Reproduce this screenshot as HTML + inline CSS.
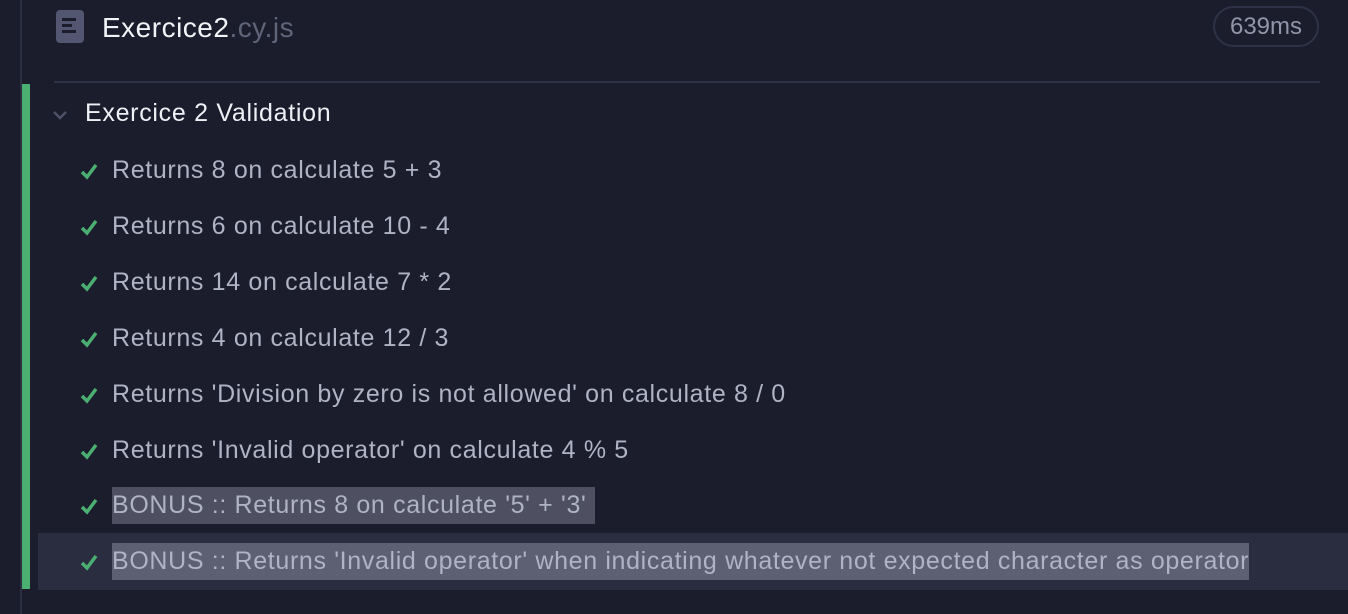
<!DOCTYPE html>
<html><head><style>
body{margin:0;width:1348px;height:614px;background:#1b1d2c;overflow:hidden;font-family:"Liberation Sans",sans-serif;position:relative}
.vl{position:absolute;left:20px;top:0;width:2px;height:614px;background:#2c2f42}
.gb{position:absolute;left:22px;top:84px;width:8px;height:505px;background:#4caf72}
.hr{position:absolute;left:54px;top:81px;width:1266px;height:2px;background:#2e3145}
.title{position:absolute;left:102px;top:12px;font-size:28px;letter-spacing:0.5px;color:#f2f3f7}
.title span{color:#5f6479}
.badge{position:absolute;left:1213px;top:6px;width:106px;height:41px;border:2px solid #2f3246;border-radius:22px;box-sizing:border-box;color:#9295a8;font-size:24px;line-height:37px;text-align:center}
.suite{position:absolute;left:85px;top:99px;font-size:25px;letter-spacing:0.7px;color:#eef0f5}
.row{position:absolute;left:0;font-size:25px;letter-spacing:0.65px;color:#b0b3c4;height:36px;line-height:37px}
.row .t{position:absolute;left:112px;white-space:nowrap}
.sel{background:#4e5062}
.hov{position:absolute;left:38px;top:533px;width:1310px;height:57px;background:#2a2d40}
.ck{position:absolute;left:80px;top:10px}
</style></head><body>
<div class="vl"></div>
<div class="hov"></div>
<div class="gb"></div>
<svg style="position:absolute;left:56px;top:10px" width="28" height="33" viewBox="0 0 28 33"><rect x="0" y="0" width="28" height="33" rx="4" fill="#525670"/><rect x="6" y="8" width="14" height="3" fill="#1b1d2c"/><rect x="6" y="14" width="10" height="3" fill="#1b1d2c"/><rect x="6" y="20" width="14" height="3" fill="#1b1d2c"/></svg>
<div class="title">Exercice2<span>.cy.js</span></div>
<div class="badge">639ms</div>
<div class="hr"></div>
<svg style="position:absolute;left:52px;top:110px" width="16" height="10"><path d="M2 2 L8 8 L14 2" stroke="#4e5268" stroke-width="2.5" fill="none"/></svg>
<div class="suite">Exercice 2 Validation</div>

<div class="row" style="top:152px"><svg class="ck" width="18" height="18"><path d="M2 10 L7 15 L16 3" stroke="#4caf72" stroke-width="3.5" fill="none"/></svg><span class="t">Returns 8 on calculate 5 + 3</span></div>
<div class="row" style="top:208px"><svg class="ck" width="18" height="18"><path d="M2 10 L7 15 L16 3" stroke="#4caf72" stroke-width="3.5" fill="none"/></svg><span class="t">Returns 6 on calculate 10 - 4</span></div>
<div class="row" style="top:264px"><svg class="ck" width="18" height="18"><path d="M2 10 L7 15 L16 3" stroke="#4caf72" stroke-width="3.5" fill="none"/></svg><span class="t">Returns 14 on calculate 7 * 2</span></div>
<div class="row" style="top:320px"><svg class="ck" width="18" height="18"><path d="M2 10 L7 15 L16 3" stroke="#4caf72" stroke-width="3.5" fill="none"/></svg><span class="t">Returns 4 on calculate 12 / 3</span></div>
<div class="row" style="top:376px"><svg class="ck" width="18" height="18"><path d="M2 10 L7 15 L16 3" stroke="#4caf72" stroke-width="3.5" fill="none"/></svg><span class="t">Returns 'Division by zero is not allowed' on calculate 8 / 0</span></div>
<div class="row" style="top:432px"><svg class="ck" width="18" height="18"><path d="M2 10 L7 15 L16 3" stroke="#4caf72" stroke-width="3.5" fill="none"/></svg><span class="t">Returns 'Invalid operator' on calculate 4 % 5</span></div>
<div class="row" style="top:487px"><svg class="ck" width="18" height="18"><path d="M2 10 L7 15 L16 3" stroke="#4caf72" stroke-width="3.5" fill="none"/></svg><span class="t sel" style="width:483px">BONUS :: Returns 8 on calculate '5' + '3'</span></div>
<div class="row" style="top:543px"><svg class="ck" width="18" height="18"><path d="M2 10 L7 15 L16 3" stroke="#4caf72" stroke-width="3.5" fill="none"/></svg><span class="t sel" style="background:#5d5f72">BONUS :: Returns 'Invalid operator' when indicating whatever not expected character as operator</span></div>
</body></html>
